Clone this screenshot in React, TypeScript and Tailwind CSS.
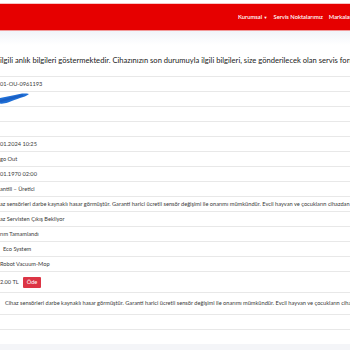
const rows: { text?: string; blur?: boolean; shift?: number }[] = [
  { text: '01-OU-0961193' },
  { blur: true },
  {},
  {},
  { text: '01.2024 10:25' },
  { text: 'go Out' },
  { text: '01.1970 02:00' },
  { text: 'antili – Üretici' },
  { text: 'az sensörleri darbe kaynaklı hasar görmüştür. Garanti harici ücretli sensör değişimi ile onarımı mümkündür. Evcil hayvan ve çocukların cihazdan uzak durun.' },
  { text: 'az Servisten Çıkış Bekliyor' },
  { text: 'rım Tamamlandı' },
  { text: 'Eco System', shift: 3 },
  { text: 'Robot Vacuum-Mop' },
]

function Scribble() {
  return (
    <svg width="30" height="12" viewBox="0 0 30 12" className="block">
      <path
        d="M0 5 C5 4 10 3 15 2 C19 1 24 0 29 1 C27 3 23 4 20 5 C17 6 12 8 8 9.5 C5 10.5 2 11 0 10.5 Z"
        fill="#1f6fd6"
      />
      <path d="M1 8 C7 6.5 13 4.5 22 2.5" stroke="#1a5fc4" strokeWidth="2.2" strokeLinecap="round" fill="none" />
    </svg>
  )
}

export default function App() {
  return (
    <div className="w-[350px] h-[350px] overflow-hidden bg-white font-['Lato','Liberation_Sans',sans-serif] text-[#3a3a3a]">
      {/* navbar */}
      <div className="h-[4px] border-b border-[#f7c4c4]" />
      <div className="h-[27px] bg-[#e60000] border-b border-[#f29a9a] flex items-center gap-[6px] pl-[238px] text-white text-[5.8px] font-semibold whitespace-nowrap overflow-hidden">
        <span>Kurumsal <span className="text-[4px] align-middle">▼</span></span>
        <span>Servis Noktalarımız</span>
        <span>Markalarımız</span>
      </div>
      <div className="h-[14px] bg-gradient-to-b from-[#f1f4f9] to-white" />

      <div className="pt-[9px]">
        <p className="text-[7.6px] leading-[12px] text-[#222] whitespace-nowrap">
          ilgili anlık bilgileri göstermektedir. Cihazınızın son durumuyla ilgili bilgileri, size gönderilecek olan servis formunda bulabilirsiniz.
        </p>

        <div className="mt-[10px] border-t border-[#e8e8e8]">
          {rows.map((r, i) => (
            <div
              key={i}
              className="h-[15px] border-b border-[#e8e8e8] flex items-center text-[5.65px] whitespace-nowrap"
            >
              {r.blur ? (
                <Scribble />
              ) : (
                <span style={{ marginLeft: r.shift ?? 0 }}>{r.text}</span>
              )}
            </div>
          ))}
          <div className="h-[21px] border-b border-[#e8e8e8] flex items-center gap-[4px] text-[5.65px] whitespace-nowrap">
            <span>2.00 TL</span>
            <span className="bg-[#dc3545] text-white rounded-[1px] px-[4px] h-[11px] flex items-center">Öde</span>
          </div>
          <div className="h-[22px] border-b border-[#e8e8e8] flex items-center pl-[5px] text-[5.65px] whitespace-nowrap">
            Cihaz sensörleri darbe kaynaklı hasar görmüştür. Garanti harici ücretli sensör değişimi ile onarımı mümkündür. Evcil hayvan ve çocukların cihazdan uzak durun.
          </div>
          <div className="h-[15px] border-b border-[#e8e8e8]" />
          <div className="h-[14px]" />
          <div className="h-[10px] bg-[#f4f5f8]" />
        </div>
      </div>
    </div>
  )
}
